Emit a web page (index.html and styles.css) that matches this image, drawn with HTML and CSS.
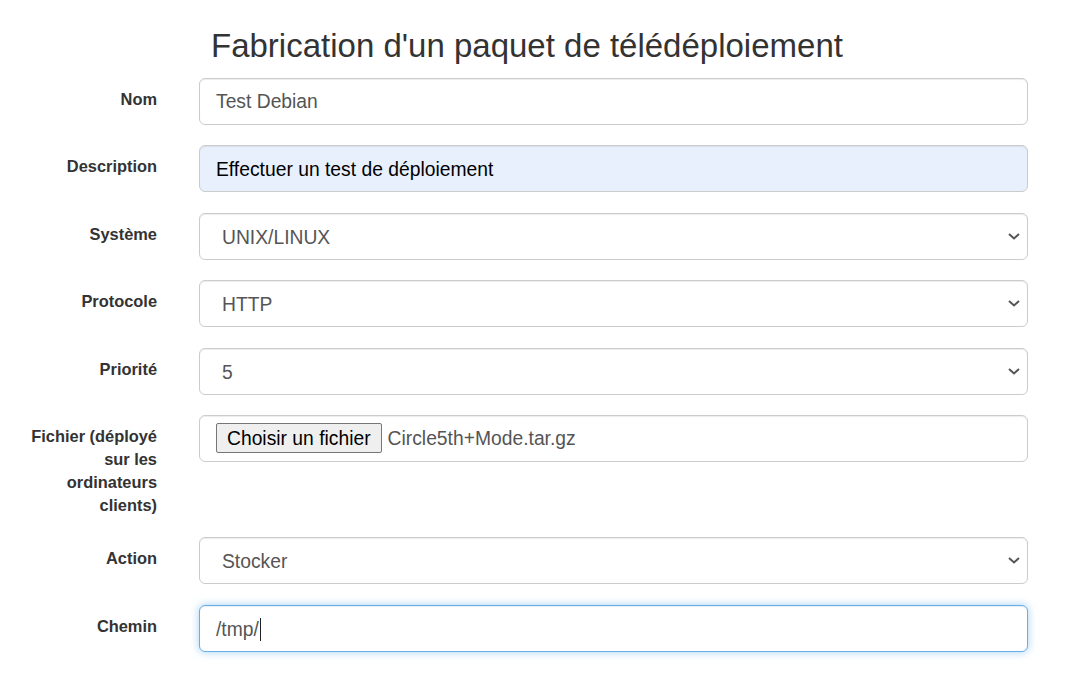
FILE: index.html
```html
<!DOCTYPE html>
<html lang="fr">
<head>
<meta charset="utf-8">
<title>Fabrication d'un paquet de télédéploiement</title>
<link rel="stylesheet" href="styles.css">
</head>
<body>
<div class="page">
  <h2 class="title">Fabrication d'un paquet de télédéploiement</h2>
  <form class="form">
    <div class="row">
      <label class="lbl">Nom</label>
      <div class="ctl"><input class="fc" type="text" value="Test Debian"></div>
    </div>
    <div class="row">
      <label class="lbl">Description</label>
      <div class="ctl"><input class="fc fc-auto" type="text" value="Effectuer un test de déploiement"></div>
    </div>
    <div class="row">
      <label class="lbl">Système</label>
      <div class="ctl sel">
        <select class="fc fc-sel"><option>UNIX/LINUX</option></select>
        <svg class="chev" width="12" height="7" viewBox="0 0 12 7"><polyline points="1,1 6,5.5 11,1" fill="none" stroke="#555" stroke-width="2"/></svg>
      </div>
    </div>
    <div class="row">
      <label class="lbl">Protocole</label>
      <div class="ctl sel">
        <select class="fc fc-sel"><option>HTTP</option></select>
        <svg class="chev" width="12" height="7" viewBox="0 0 12 7"><polyline points="1,1 6,5.5 11,1" fill="none" stroke="#555" stroke-width="2"/></svg>
      </div>
    </div>
    <div class="row">
      <label class="lbl">Priorité</label>
      <div class="ctl sel">
        <select class="fc fc-sel"><option>5</option></select>
        <svg class="chev" width="12" height="7" viewBox="0 0 12 7"><polyline points="1,1 6,5.5 11,1" fill="none" stroke="#555" stroke-width="2"/></svg>
      </div>
    </div>
    <div class="row row-tall">
      <label class="lbl">Fichier (déployé sur les ordinateurs clients)</label>
      <div class="ctl">
        <div class="fc fc-file">
          <span class="file-btn">Choisir un fichier</span>
          <span class="file-name">Circle5th+Mode.tar.gz</span>
        </div>
      </div>
    </div>
    <div class="row">
      <label class="lbl">Action</label>
      <div class="ctl sel">
        <select class="fc fc-sel"><option>Stocker</option></select>
        <svg class="chev" width="12" height="7" viewBox="0 0 12 7"><polyline points="1,1 6,5.5 11,1" fill="none" stroke="#555" stroke-width="2"/></svg>
      </div>
    </div>
    <div class="row">
      <label class="lbl">Chemin</label>
      <div class="ctl">
        <div class="fc fc-focus">/tmp/<span class="caret"></span></div>
      </div>
    </div>
  </form>
</div>
</body>
</html>
```
FILE: styles.css
```css
html, body {
  margin: 0;
  padding: 0;
  background: #fff;
}
body {
  font-family: "Liberation Sans", Arial, sans-serif;
  color: #333;
}
.page {
  width: 1070px;
}
.title {
  margin: 28px 0 13.7px 211px;
  font-size: 33px;
  line-height: 1.1;
  font-weight: normal;
  color: #333;
}
.form {
  margin: 0;
  padding-left: 17px;
  width: 1011px;
}
.row {
  display: flex;
  align-items: flex-start;
  gap: 42px;
  margin-bottom: 20.4px;
}
.row-tall {
  margin-bottom: 20.2px;
}
.lbl {
  width: 140px;
  flex: none;
  text-align: right;
  font-weight: bold;
  font-size: 16.4px;
  line-height: 23px;
  padding-top: 10px;
  color: #333;
}
.ctl {
  width: 829px;
  flex: none;
}
.sel {
  position: relative;
}
.fc {
  display: block;
  box-sizing: border-box;
  width: 100%;
  height: 47px;
  margin: 0;
  padding: 11px 16px 9px;
  font-family: "Liberation Sans", Arial, sans-serif;
  font-size: 19.3px;
  line-height: 25px;
  color: #555;
  background: #fff;
  border: 1px solid #ccc;
  border-radius: 6px;
  box-shadow: inset 0 1px 1px rgba(0, 0, 0, .075);
  outline: none;
}
.fc-auto {
  background: #e8f0fe;
  color: #000;
}
.fc-sel {
  -webkit-appearance: none;
  appearance: none;
  padding-left: 22px;
}
.chev {
  position: absolute;
  right: 8px;
  top: 20px;
}
.fc-file {
  display: flex;
  align-items: center;
  padding: 0 16px;
}
.file-btn {
  box-sizing: border-box;
  height: 30px;
  padding: 0 10px;
  display: flex;
  align-items: center;
  background: #efefef;
  border: 1px solid #767676;
  border-radius: 2px;
  color: #000;
  font-size: 19.3px;
}
.file-name {
  margin-left: 6px;
  color: #555;
}
.fc-focus {
  border-color: #66afe9;
  box-shadow: inset 0 1px 1px rgba(0, 0, 0, .075), 0 0 8px rgba(102, 175, 233, .6);
}
.caret {
  display: inline-block;
  width: 1px;
  height: 23px;
  background: #222;
  vertical-align: -5px;
  margin-left: 1px;
}
```
